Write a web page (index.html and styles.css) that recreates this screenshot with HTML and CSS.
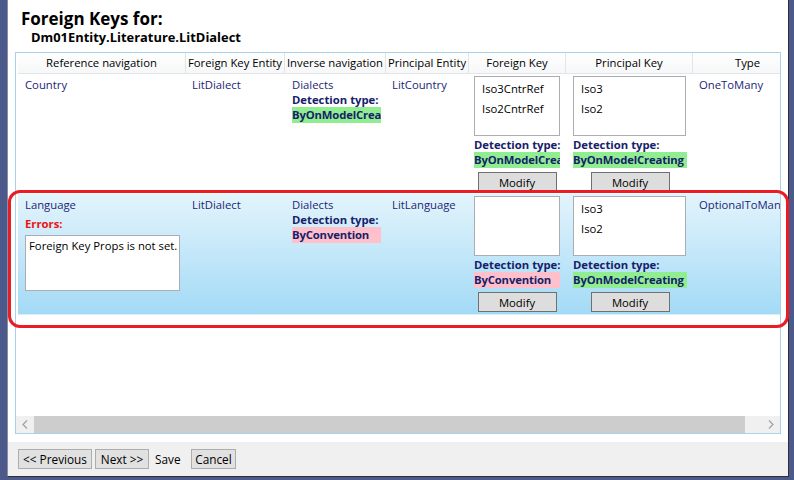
FILE: index.html
```html
<!DOCTYPE html>
<html>
<head>
<meta charset="utf-8">
<title>Foreign Keys</title>
<link rel="stylesheet" href="styles.css">
</head>
<body>
<div class="window">
  <div class="main">
    <h1 class="title">Foreign Keys for:</h1>
    <div class="subtitle">Dm01Entity.Literature.LitDialect</div>
    <div class="grid">
      <div class="view">
        <div class="row head">
          <div class="hc">Reference navigation</div>
          <div class="hc">Foreign Key Entity</div>
          <div class="hc">Inverse navigation</div>
          <div class="hc">Principal Entity</div>
          <div class="hc">Foreign Key</div>
          <div class="hc">Principal Key</div>
          <div class="hc">Type</div>
        </div>

        <div class="row data">
          <div class="c c1"><div class="txt">Country</div></div>
          <div class="c c2"><div class="txt">LitDialect</div></div>
          <div class="c c3">
            <div class="txt">Dialects</div>
            <div class="lbl">Detection type:</div>
            <div class="val ok">ByOnModelCreating</div>
          </div>
          <div class="c c4"><div class="txt">LitCountry</div></div>
          <div class="c c5">
            <div class="list"><div class="item">Iso3CntrRef</div><div class="item">Iso2CntrRef</div></div>
            <div class="lbl">Detection type:</div>
            <div class="val ok">ByOnModelCreating</div>
            <div class="btn-wrap"><button class="btn">Modify</button></div>
          </div>
          <div class="c c6">
            <div class="list"><div class="item">Iso3</div><div class="item">Iso2</div></div>
            <div class="lbl">Detection type:</div>
            <div class="val ok">ByOnModelCreating</div>
            <div class="btn-wrap"><button class="btn">Modify</button></div>
          </div>
          <div class="c c7"><div class="txt">OneToMany</div></div>
        </div>

        <div class="row data sel">
          <div class="c c1">
            <div class="txt">Language</div>
            <div class="err">Errors:</div>
            <div class="errbox">Foreign Key Props is not set.</div>
          </div>
          <div class="c c2"><div class="txt">LitDialect</div></div>
          <div class="c c3">
            <div class="txt">Dialects</div>
            <div class="lbl">Detection type:</div>
            <div class="val bad">ByConvention</div>
          </div>
          <div class="c c4"><div class="txt">LitLanguage</div></div>
          <div class="c c5">
            <div class="list"></div>
            <div class="lbl">Detection type:</div>
            <div class="val bad">ByConvention</div>
            <div class="btn-wrap"><button class="btn">Modify</button></div>
          </div>
          <div class="c c6">
            <div class="list"><div class="item">Iso3</div><div class="item">Iso2</div></div>
            <div class="lbl">Detection type:</div>
            <div class="val ok">ByOnModelCreating</div>
            <div class="btn-wrap"><button class="btn">Modify</button></div>
          </div>
          <div class="c c7"><div class="txt">OptionalToMany</div></div>
        </div>
      </div>
      <div class="hscroll">
        <div class="arrow"><svg width="6" height="9" viewBox="0 0 6 9"><path d="M5 0.5 L1 4.5 L5 8.5" fill="none" stroke="#a0a0a0" stroke-width="1.2"/></svg></div>
        <div class="thumb"></div>
        <div class="track"></div>
        <div class="arrow"><svg width="6" height="9" viewBox="0 0 6 9"><path d="M1 0.5 L5 4.5 L1 8.5" fill="none" stroke="#a0a0a0" stroke-width="1.2"/></svg></div>
      </div>
    </div>
  </div>
  <div class="footer">
    <button class="fbtn prev">&lt;&lt; Previous</button>
    <button class="fbtn next">Next &gt;&gt;</button>
    <span class="save">Save</span>
    <button class="fbtn cancel">Cancel</button>
  </div>
  <div class="highlight"></div>
</div>
</body>
</html>
```

FILE: styles.css
```css
* { box-sizing: border-box; }
html, body { margin: 0; padding: 0; }
body {
  background: #4b5a8a;
  width: 794px;
  height: 480px;
  overflow: hidden;
  font-family: "Open Sans", "Noto Sans", sans-serif;
  font-size: 11.3px;
}
.window {
  position: relative;
  margin-left: 7px;
  width: 782px;
  height: 477px;
  border-left: 1px solid #8a8fa0;
  border-right: 1px solid #2e2e3a;
  border-bottom: 1px solid #2e2e3a;
  display: flex;
  flex-direction: column;
}
.main {
  background: #fff;
  height: 442px;
  padding: 8px 7px 8px 7px;
  display: flex;
  flex-direction: column;
}
.title {
  margin: 0 0 0 6px;
  font-size: 17px;
  font-weight: 700;
  line-height: 22px;
  color: #000;
}
.subtitle {
  margin: 0 0 0 16px;
  font-size: 12.9px;
  font-weight: 700;
  line-height: 15px;
  color: #000;
}
.grid {
  margin-top: 7px;
  flex: 1;
  border: 1px solid #a7d3ea;
  display: flex;
  flex-direction: column;
  overflow: hidden;
}
.view {
  flex: 1;
  padding-left: 2px;
  overflow: hidden;
}
.row {
  display: grid;
  grid-template-columns: 168px 99px 101px 83px 97px 127px 110px;
  width: 785px;
}
.head {
  height: 21px;
  background: linear-gradient(#ffffff, #f6f7f8);
  border-bottom: 1px solid #e3e5e8;
}
.hc {
  text-align: center;
  line-height: 20px;
  color: #000;
  border-right: 1px solid #e3e5e8;
  white-space: nowrap;
  overflow: hidden;
}
.data {
  height: 120px;
  color: #1c2677;
}
.data.sel {
  height: 121px;
  background: linear-gradient(#e3f4fc, #a3daf6);
  border-bottom: 1px solid #d9eff9;
}
.c {
  padding-top: 3px;
  overflow: hidden;
  white-space: nowrap;
  min-width: 0;
}
.c1 { padding-left: 7px; }
.c2 { padding-left: 6px; }
.c3 { padding-left: 7px; padding-right: 5px; }
.c4 { padding-left: 6px; }
.c5 { padding-left: 5px; padding-right: 6px; padding-top: 2px; }
.c6 { padding-left: 7px; padding-right: 6px; padding-top: 2px; }
.c7 { padding-left: 6px; }
.txt { line-height: 16px; }
.c3 .txt { line-height: 15px; }
.lbl {
  font-weight: 700;
  line-height: 15px;
  color: #16216a;
}
.val {
  font-weight: 700;
  line-height: 16px;
  height: 16px;
  color: #16216a;
  letter-spacing: -0.15px;
  overflow: hidden;
}
.ok { background: #90ee90; }
.bad { background: #ffc0cb; }
.list {
  height: 60px;
  width: 100%;
  background: #fff;
  border: 1px solid #abadb3;
  padding: 2px 0 0 7px;
  margin-bottom: 1px;
  color: #000;
}
.c6 .list { width: 113px; }
.item { line-height: 20px; }
.btn-wrap {
  display: flex;
  justify-content: center;
  margin-top: 4px;
}
.btn {
  width: 79px;
  height: 20px;
  background: #dddddd;
  border: 1px solid #707070;
  font: inherit;
  color: #000;
  padding: 0;
}
.err {
  color: #ee1111;
  font-weight: 700;
  line-height: 16px;
  margin-top: 3px;
}
.errbox {
  margin-top: 3px;
  width: 155px;
  height: 56px;
  background: #fff;
  border: 1px solid #abadb3;
  color: #000;
  padding: 2px 0 0 3px;
  line-height: 16px;
}
.hscroll {
  height: 17px;
  display: flex;
  background: #f0f0f0;
}
.arrow {
  width: 18px;
  display: flex;
  align-items: center;
  justify-content: center;
}
.thumb {
  width: 711px;
  background: #cdcdcd;
}
.track { flex: 1; }
.footer {
  flex: 1;
  background: #f0f0f0;
  padding: 7px 0 0 10px;
  display: flex;
  align-items: flex-start;
}
.fbtn {
  height: 20px;
  background: #e1e1e1;
  border: 1px solid #adadad;
  font: inherit;
  font-size: 11.8px;
  color: #000;
  padding: 0;
}
.prev { width: 74px; }
.next { width: 54px; margin-left: 3px; }
.save { line-height: 20px; margin-left: 6px; width: 36px; color: #000; font-size: 11.8px; }
.cancel { width: 45px; }
.highlight {
  position: absolute;
  left: 0;
  top: 190px;
  width: 781px;
  height: 138px;
  border: 3px solid #ec1c24;
  border-radius: 12px;
  pointer-events: none;
}
```
